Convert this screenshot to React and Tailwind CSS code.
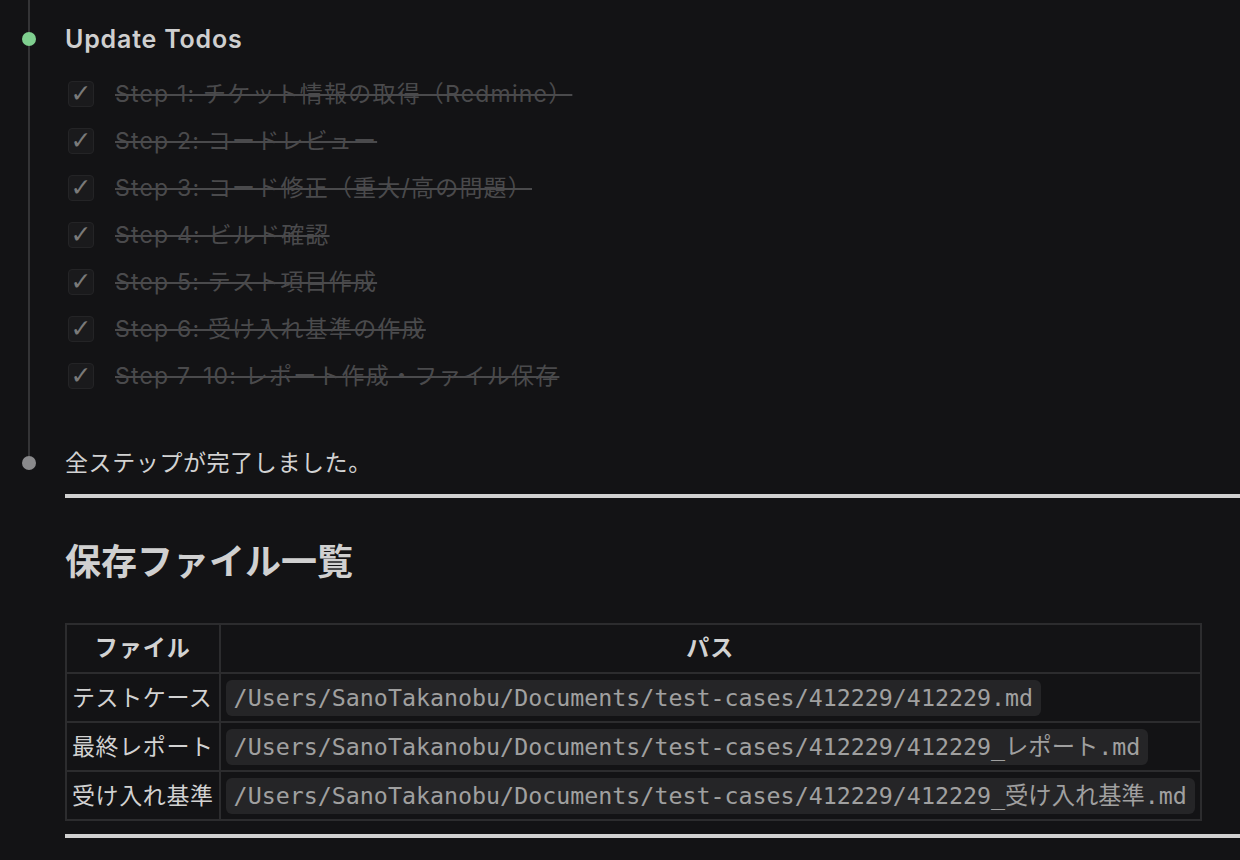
import React from 'react';

const steps = [
  'Step 1: チケット情報の取得（Redmine）',
  'Step 2: コードレビュー',
  'Step 3: コード修正（重大/高の問題）',
  'Step 4: ビルド確認',
  'Step 5: テスト項目作成',
  'Step 6: 受け入れ基準の作成',
  'Step 7-10: レポート作成・ファイル保存',
];

const files = [
  ['テストケース', '/Users/SanoTakanobu/Documents/test-cases/412229/412229.md'],
  ['最終レポート', '/Users/SanoTakanobu/Documents/test-cases/412229/412229_レポート.md'],
  ['受け入れ基準', '/Users/SanoTakanobu/Documents/test-cases/412229/412229_受け入れ基準.md'],
];

const sans = "font-['Inter','Noto_Sans_CJK_JP',sans-serif]";

const TodoRow = ({ text }) => (
  <li className="flex items-center h-[47px]">
    <span className="ml-[3px] w-[26px] h-[26px] rounded-[4px] bg-[#1a1a1c] border border-[#242426] flex items-center justify-center text-[25px] leading-none text-[#7a7a7a] font-['DejaVu_Sans',sans-serif]">
      ✓
    </span>
    <span className="ml-[21px] text-[23px] leading-[34px] tracking-[1.2px] text-[#4a4a4c] line-through decoration-[#4a4a4c]">
      {text}
    </span>
  </li>
);

export default function App() {
  return (
    <div className={`min-h-[860px] w-full bg-[#131315] overflow-hidden ${sans}`}>
      {/* todo block */}
      <div className="flex">
        <div className="w-[58px] shrink-0 flex flex-col items-center">
          <div className="w-[2px] h-[32px] bg-[#343436]" />
          <div className="w-[14px] h-[14px] rounded-full bg-[#7fcf8f]" />
          <div className="w-[2px] flex-1 bg-[#343436]" />
        </div>
        <div className="ml-[7px] pt-[22px] pb-[47px]">
          <h2 className="text-[25px] leading-[34px] tracking-[0.8px] font-semibold text-[#cfcfcf]">Update Todos</h2>
          <ul className="mt-[14px]">
            {steps.map((s) => (
              <TodoRow key={s} text={s} />
            ))}
          </ul>
        </div>
      </div>

      {/* done message */}
      <div className="flex">
        <div className="w-[58px] shrink-0 flex flex-col items-center">
          <div className="w-[2px] h-[10px] bg-[#343436]" />
          <div className="w-[14px] h-[14px] rounded-full bg-[#8a8a8c]" />
        </div>
        <p className="ml-[7px] text-[23px] leading-[34px] tracking-[0.6px] text-[#d2d2d2]">全ステップが完了しました。</p>
      </div>

      <div className="ml-[65px]">
        <div className="mt-[14px] h-[4px] bg-[#d0d0d0]" />
        <h1 className="mt-[39px] text-[36px] leading-[50px] font-bold text-[#d0d0d0]">保存ファイル一覧</h1>

        <table className="mt-[36px] border-collapse text-[23px] text-[#d2d2d2]">
          <thead>
            <tr className="h-[49px]">
              <th className="border-2 border-[#2c2c2e] px-[5px] font-bold tracking-[1px]">ファイル</th>
              <th className="border-2 border-[#2c2c2e] px-[5px] font-bold tracking-[1px]">パス</th>
            </tr>
          </thead>
          <tbody>
            {files.map(([name, path]) => (
              <tr key={name} className="h-[49px]">
                <td className="border-2 border-[#2c2c2e] px-[5px] leading-[34px] tracking-[0.6px] whitespace-nowrap">{name}</td>
                <td className="border-2 border-[#2c2c2e] px-[5px] py-0">
                  <code className="inline-block align-middle rounded-[6px] bg-[#252527] px-[8px] py-[4px] text-[23.3px] leading-[28px] text-[#a0a0a0] whitespace-nowrap font-['DejaVu_Sans_Mono','Noto_Sans_CJK_JP',monospace]">
                    {path}
                  </code>
                </td>
              </tr>
            ))}
          </tbody>
        </table>

        <div className="mt-[13px] h-[4px] bg-[#d0d0d0]" />
      </div>
    </div>
  );
}
